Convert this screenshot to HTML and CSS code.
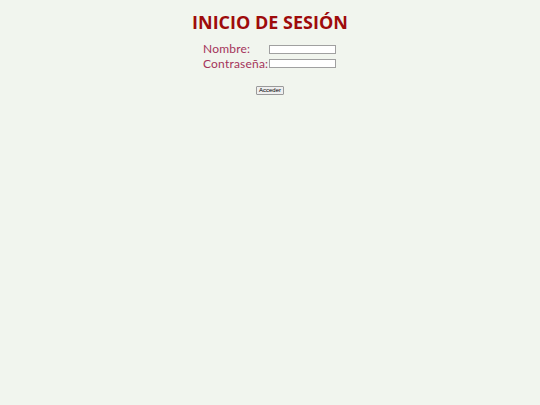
FILE: index.html
```html
<!DOCTYPE html>
<html lang="es">
<head>
    <meta charset="UTF-8">
    <meta name="viewport" content="width=device-width, initial-scale=1.0">
    <title>Inicio de sesión</title>
    <link rel="stylesheet" href="styles.css">
</head>
<body>
    <h1 class="title">INICIO DE SESIÓN</h1>
    <form class="login-form">
        <div class="fields">
            <label class="label" for="nombre">Nombre:</label>
            <input class="field" type="text" id="nombre">
            <label class="label" for="pass">Contraseña:</label>
            <input class="field" type="password" id="pass">
        </div>
        <button class="submit" type="button">Acceder</button>
    </form>
</body>
</html>
```

FILE: styles.css
```css
body {
    margin: 0;
    background-color: #f1f5ee;
    font-family: "Open Sans", sans-serif;
    text-align: center;
}

.title {
    margin: 0;
    padding-top: 10px;
    color: #9e0b0b;
    font-size: 18px;
    font-weight: 700;
    line-height: 24px;
}

.login-form {
    display: flex;
    flex-direction: column;
    align-items: center;
    padding-top: 8px;
}

.fields {
    display: grid;
    grid-template-columns: 66px 68px;
    row-gap: 0;
    align-items: center;
    text-align: left;
}

.label {
    color: #a4335a;
    font-family: "Lato", sans-serif;
    font-size: 12px;
    line-height: 14.5px;
    letter-spacing: 0.2px;
}

.field {
    box-sizing: border-box;
    width: 67px;
    height: 9px;
    margin: 0;
    padding: 0;
    border: 1px solid #a0a0a0;
    background: #fff;
}

.submit {
    margin-top: 15px;
    padding: 0 2px;
    height: 9px;
    font-family: "Liberation Sans", sans-serif;
    font-size: 6px;
    line-height: 7px;
    color: #000;
    background: #efefef;
    border: 1px solid #9a9a9a;
    border-radius: 1px;
}
```
